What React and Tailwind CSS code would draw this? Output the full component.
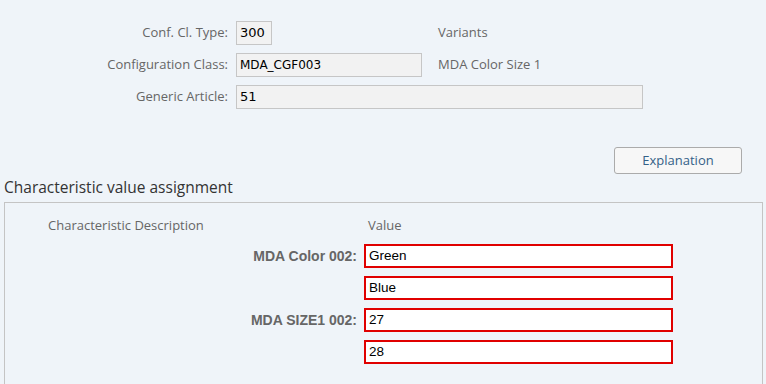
export default function App() {
  const lbl = "text-[13px] text-[#666666] text-right";
  const rows = [
    { label: "MDA Color 002:", value: "Green" },
    { label: "", value: "Blue" },
    { label: "MDA SIZE1 002:", value: "27" },
    { label: "", value: "28" },
  ];
  return (
    <div className="w-[766px] h-[384px] overflow-hidden bg-[#eff4f9] font-['Open_Sans','Noto_Sans',sans-serif]">
      <div className="pt-[21px] flex flex-col gap-[8px]">
        <div className="flex items-center h-[24px]">
          <div className={`w-[228px] ${lbl}`}>Conf. Cl. Type:</div>
          <div className="ml-[8px] w-[202px]">
            <div className="w-[36px] h-[24px] border border-[#c6c6c6] bg-[#f2f2f2] flex items-center px-[3px] text-[13px] text-[#000] font-['DejaVu_Sans',sans-serif]">300</div>
          </div>
          <div className="text-[13px] text-[#666666]">Variants</div>
        </div>
        <div className="flex items-center h-[24px]">
          <div className={`w-[228px] ${lbl}`}>Configuration Class:</div>
          <div className="ml-[8px] w-[202px]">
            <div className="w-[186px] h-[24px] border border-[#c6c6c6] bg-[#f2f2f2] flex items-center px-[3px] text-[12px] text-[#000] font-['DejaVu_Sans',sans-serif]">MDA_CGF003</div>
          </div>
          <div className="text-[13px] text-[#666666]">MDA Color Size 1</div>
        </div>
        <div className="flex items-center h-[24px]">
          <div className={`w-[228px] ${lbl}`}>Generic Article:</div>
          <div className="ml-[8px] w-[407px] h-[24px] border border-[#c6c6c6] bg-[#f2f2f2] flex items-center px-[3px] text-[13px] text-[#000] font-['DejaVu_Sans',sans-serif]">51</div>
        </div>
      </div>
      <div className="flex justify-end pr-[24px] mt-[38px]">
        <button className="w-[128px] h-[27px] border border-[#ababab] rounded-[3px] bg-[#f7f7f7] text-[13px] text-[#346187]">Explanation</button>
      </div>
      <div className="pl-[4px] mt-[3px] text-[15.5px] leading-[20px] text-[#333333]">Characteristic value assignment</div>
      <div className="ml-[4px] mr-[3px] mt-[5px] h-[200px] border-t border-l border-r border-[#c4c4c4]">
        <div className="flex items-center mt-[13px] h-[20px] text-[13px] text-[#666666]">
          <div className="pl-[43px] w-[363px]">Characteristic Description</div>
          <div>Value</div>
        </div>
        <div className="mt-[8px] flex flex-col gap-[8px]">
          {rows.map((r, i) => (
            <div key={i} className="flex items-center h-[24px]">
              <div className="w-[352px] text-right text-[14px] font-bold text-[#666666] font-['Liberation_Sans',Arial,sans-serif]">{r.label}</div>
              <div className="ml-[7px] w-[309px] h-[24px] border-2 border-[#e00000] bg-white flex items-center px-[3px] text-[13.5px] text-black font-['Liberation_Sans',Arial,sans-serif]">{r.value}</div>
            </div>
          ))}
        </div>
      </div>
    </div>
  );
}
